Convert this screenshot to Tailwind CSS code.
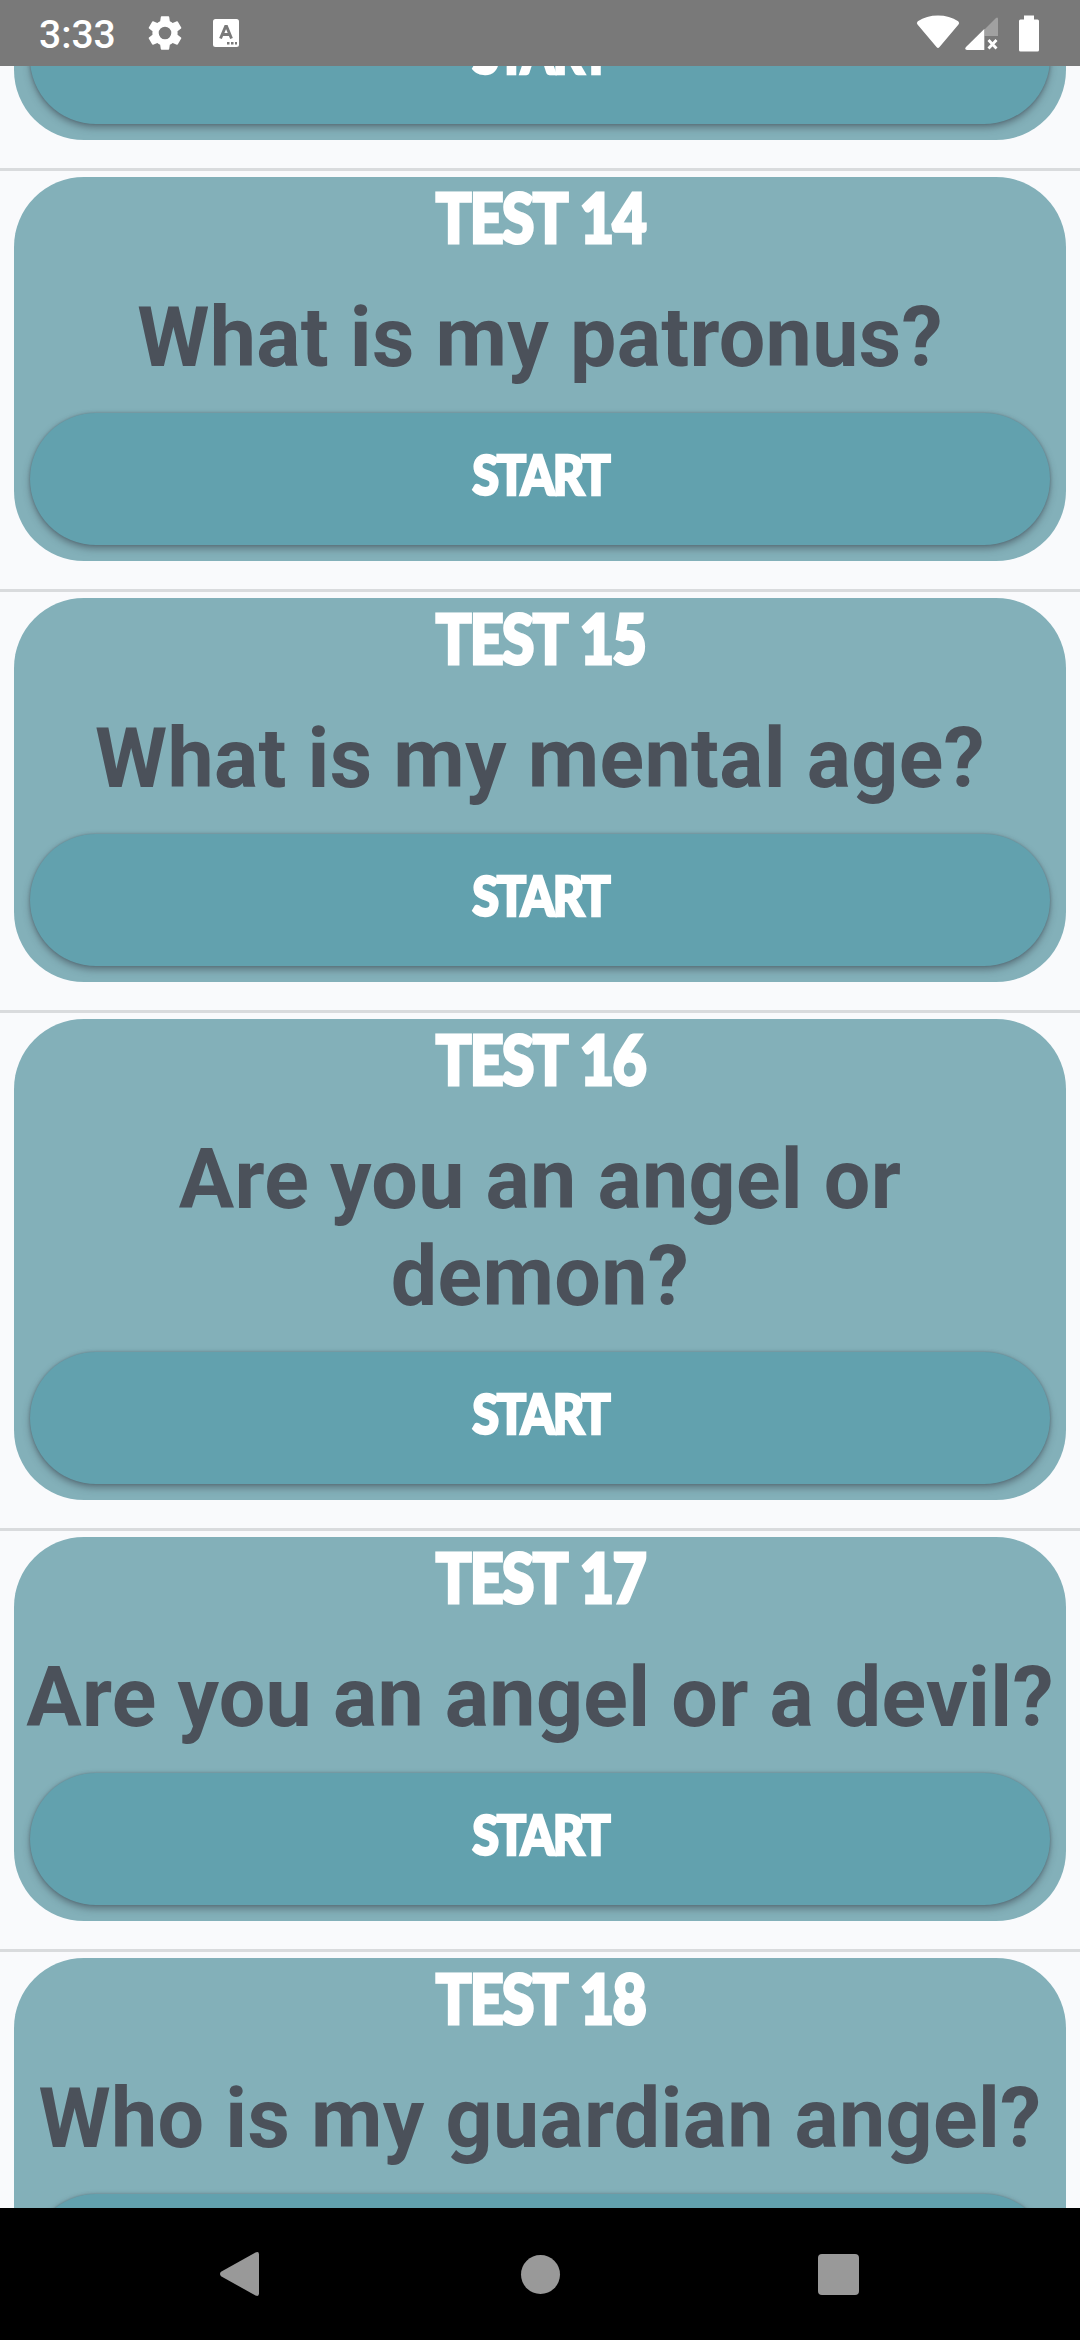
<!DOCTYPE html>
<html lang="en">
<head>
<meta charset="utf-8">
<title>Tests</title>
<script src="https://cdn.jsdelivr.net/npm/@tailwindcss/browser@4"></script>
</head>
<body class="w-[1080px] h-[2340px] overflow-hidden bg-[#f9fafc] font-['Roboto',sans-serif] flex flex-col">
<header class="h-[66px] shrink-0 bg-[#797979] text-white flex items-center pl-[39px] pr-[40px] relative z-10">
  <span class="text-[39px] font-medium leading-[66px] w-[76px] whitespace-nowrap pt-[3px]">3:33</span>
  <svg class="ml-[29px] w-[42px] h-[42px]" viewBox="0 0 24 24" fill="#fff"><path d="M19.14 12.94c.04-.3.06-.61.06-.94 0-.32-.02-.64-.07-.94l2.03-1.58a.49.49 0 0 0 .12-.61l-1.92-3.32a.49.49 0 0 0-.59-.22l-2.39.96c-.5-.38-1.03-.7-1.62-.94l-.36-2.54a.48.48 0 0 0-.48-.41h-3.84a.48.48 0 0 0-.47.41l-.36 2.54c-.59.24-1.13.57-1.62.94l-2.39-.96a.48.48 0 0 0-.59.22L2.74 8.87a.48.48 0 0 0 .12.61l2.03 1.58c-.05.3-.09.63-.09.94s.02.64.07.94l-2.03 1.58a.49.49 0 0 0-.12.61l1.92 3.32c.12.22.37.29.59.22l2.39-.96c.5.38 1.03.7 1.62.94l.36 2.54c.05.24.24.41.48.41h3.84c.24 0 .44-.17.47-.41l.36-2.54c.59-.24 1.13-.56 1.62-.94l2.39.96c.22.08.47 0 .59-.22l1.92-3.32a.48.48 0 0 0-.12-.61zM12 15.6a3.6 3.6 0 1 1 0-7.2 3.6 3.6 0 0 1 0 7.2z"/></svg>
  <svg class="ml-[27px] w-[26px] h-[30px]" viewBox="0 0 26 30"><rect y="1" width="26" height="28" rx="2.500" fill="#fff"/><path d="M7.500 20.500 12.600 8.500h1L18.500 20.500M9.500 16.500h7" fill="none" stroke="#797979" stroke-width="2.900"/><path d="M14 24h2.500v2.500H14zM18 24h2.500v2.500H18zM22 24h2v2.500h-2z" fill="#797979"/></svg>
  <svg class="ml-auto w-[44px] h-[36px]" viewBox="0 0 44 36" fill="#fff"><path d="M1.500 9.500Q0 8 1.800 6.300Q10.500 .5 22 .5T42.200 6.300Q44 8 42.500 9.500L23.500 32Q22 34 20.500 32Z"/></svg>
  <svg class="ml-[5px] w-[34px] h-[36px]" viewBox="0 0 34 36"><path d="M19.500 14.500 31 2.900Q33 1.500 33 4V21H19.500Z" fill="#a1a1a1"/><path d="M19.300 14V35H2Q-1 34.500 1 32Z" fill="#fff"/><path d="m23.500 25 8 8.500m0-8.500-8 8.500" stroke="#fff" stroke-width="2.800"/></svg>
  <svg class="ml-[19px] w-[22px] h-[37px]" viewBox="0 0 22 37" fill="#fff"><path d="M6 .5h10v4h3.500Q21 4.500 21 6V35q0 1.500-1.500 1.500h-17Q1 36.500 1 35V6Q1 4.500 2.500 4.500H6z"/></svg>
</header>
<main id="list" class="h-[2142px] shrink-0 overflow-hidden flex flex-col justify-start"></main>
<nav class="h-[132px] shrink-0 bg-black flex items-center justify-between pl-[219px] pr-[221px]">
  <svg class="w-[42px] h-[48px]" viewBox="0 0 42 48" fill="#999"><path d="M2 21.800 36.500 2.500Q40 1 40 4.500V43.500Q40 47 36.500 45.500L2 26.200Q0 24 2 21.800Z"/></svg>
  <span class="ml-[2px] size-[39px] rounded-full bg-[#999]"></span>
  <span class="size-[41px] rounded-[4px] bg-[#999]"></span>
</nav>
<template id="row">
  <section class="shrink-0 px-[14px] pt-[6px] pb-[28px] border-b-[3px] border-[#d9dbdd]">
    <article class="rounded-[70px] bg-[#83b0b9] px-[16px] pb-[16px] flex flex-col items-center">
      <h2 class="h-[112px] text-[68px] leading-[80px] font-black text-white whitespace-nowrap font-['Lato',sans-serif] tracking-[-2px] [word-spacing:3px] [-webkit-text-stroke:3px_white]"><span class="inline-block scale-x-[0.87]"></span></h2>
      <p class="w-[1052px] text-center text-[82.5px] leading-[97px] font-bold tracking-[0.33px] text-[#4b515a] whitespace-pre-line"></p>
      <button class="mt-[27px] h-[132px] w-full rounded-full bg-[#62a1ae] pb-[11px] text-white text-[56px] leading-none font-black font-['Lato',sans-serif] tracking-[-2.5px] [-webkit-text-stroke:2.5px_white] shadow-[0_4px_7px_rgba(60,70,80,0.5),0_0_3px_rgba(80,80,90,0.5)]"><span class="inline-block scale-x-[0.87]">START</span></button>
    </article>
  </section>
</template>
<script>
const list = document.getElementById('list'), row = document.getElementById('row');
[['', ''], ['TEST 14', 'What is my patronus?'], ['TEST 15', 'What is my mental age?'], ['TEST 16', 'Are you an angel or\ndemon?'], ['TEST 17', 'Are you an angel or a devil?'], ['TEST 18', 'Who is my guardian angel?']].forEach(([title, question], i) => {
  const n = row.content.cloneNode(true);
  n.querySelector('h2 span').textContent = title;
  n.querySelector('p').textContent = question;
  if (i === 0) n.querySelector('section').classList.add('-mt-[219px]');
  list.append(n);
});
</script>
</body>
</html>
